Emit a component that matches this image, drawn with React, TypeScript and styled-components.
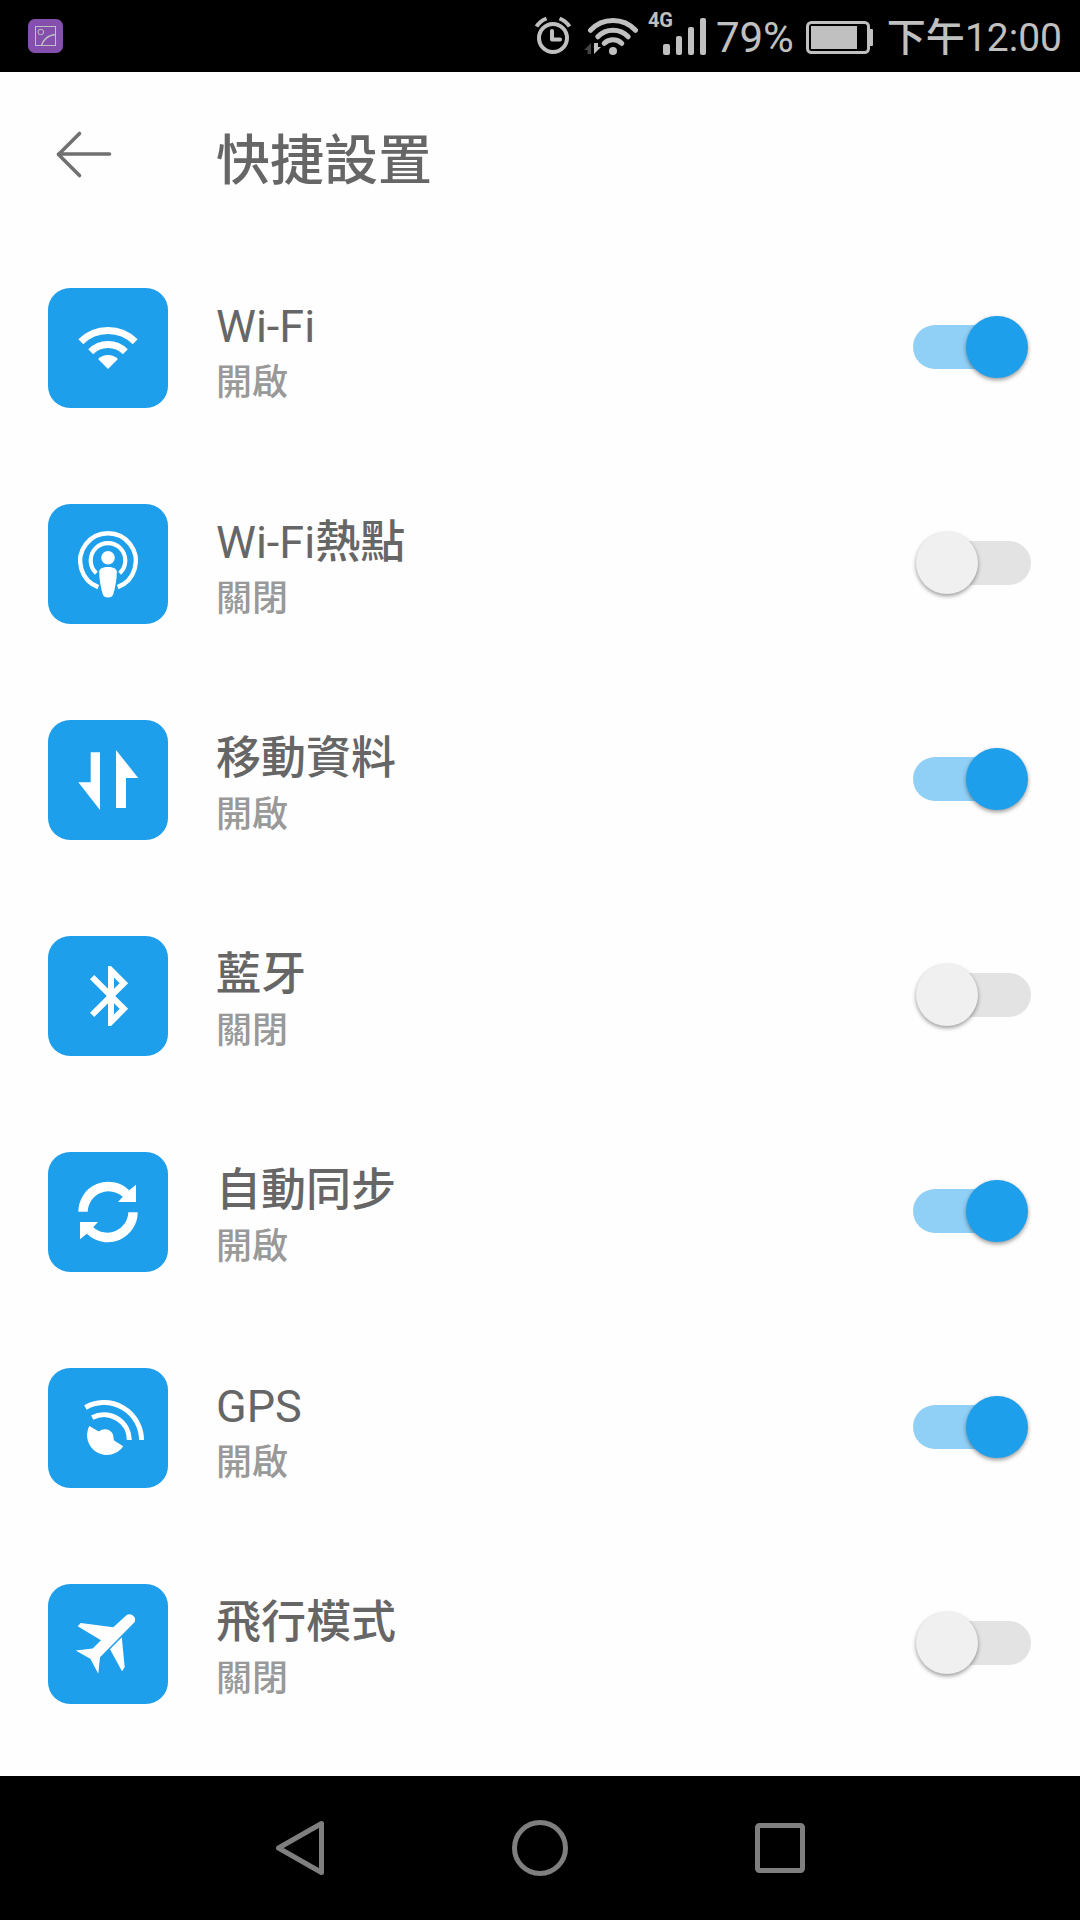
import React, { useState } from "react";
import styled, { createGlobalStyle } from "styled-components";

const GlobalStyle = createGlobalStyle`
  * { box-sizing: border-box; }
  body {
    margin: 0;
    background: #000;
    font-family: Roboto, "Noto Sans CJK TC", sans-serif;
  }
`;

const Screen = styled.div`
  display: flex;
  flex-direction: column;
  min-height: 100vh;
  background: #fefefe;
`;

const StatusBar = styled.div`
  display: flex;
  align-items: center;
  justify-content: space-between;
  padding: 0 18px 0 28px;
  background: #000;
  color: #c0c0c0;
`;

const StatusGroup = styled.div`
  display: flex;
  align-items: center;
  gap: 8px;
`;

const StatusIcon = styled.svg`
  display: block;
  flex: none;
  height: 72px;
`;

const StatusText = styled.span<{ $size: number }>`
  padding-top: 3px;
  font-size: ${(p) => p.$size}px;
  line-height: 48px;
  white-space: nowrap;
`;

const Han = styled.span`
  font-weight: 500;
`;

const Signal = styled.div`
  position: relative;
`;

const NetworkType = styled.span`
  position: absolute;
  top: 8px;
  left: 2px;
  font-size: 20px;
  font-weight: 700;
  line-height: 24px;
`;

const Header = styled.header`
  display: flex;
  align-items: center;
  gap: 96px;
  height: 168px;
  padding: 0 48px;
`;

const IconButton = styled.button`
  display: block;
  flex: none;
  padding: 0;
  border: 0;
  background: none;
  cursor: pointer;

  svg {
    display: block;
  }
`;

const Title = styled.h1`
  margin: 0;
  padding-top: 12px;
  color: #666;
  font-size: 54px;
  font-weight: 500;
  line-height: 64px;
`;

const List = styled.ul`
  flex: 1;
  margin: 0;
  padding: 0 0 24px;
  list-style: none;
`;

const Row = styled.li`
  display: flex;
  align-items: center;
  gap: 48px;
  height: 216px;
  padding: 0 48px;
`;

const Tile = styled.svg`
  flex: none;
  width: 120px;
  height: 120px;
  border-radius: 22px;
  background: #1e9fec;
`;

const RowText = styled.label`
  flex: 1;
  display: flex;
  flex-direction: column;
  cursor: pointer;
`;

const RowName = styled.span`
  color: #666;
  font-size: 45px;
  line-height: 70px;
`;

const RowState = styled.span`
  color: #999;
  font-size: 36px;
  font-weight: 500;
  line-height: 42px;
`;

const Switch = styled.input`
  appearance: none;
  display: grid;
  align-items: center;
  flex: none;
  width: 120px;
  height: 66px;
  margin: 0;
  padding: 0 1px 2px;
  cursor: pointer;

  &::before,
  &::after {
    content: "";
    grid-area: 1 / 1;
  }

  &::before {
    justify-self: end;
    width: 100px;
    height: 44px;
    border-radius: 22px;
    background: #e3e3e3;
  }

  &::after {
    justify-self: start;
    width: 62px;
    height: 62px;
    margin: 0 3px;
    border-radius: 50%;
    background: #f0f0f0;
    box-shadow: 0 2px 4px rgba(0, 0, 0, 0.4);
  }

  &:checked::before {
    justify-self: start;
    background: #90d0f6;
  }

  &:checked::after {
    justify-self: end;
    background: #1e9fec;
  }
`;

const NavBar = styled.nav`
  display: flex;
  align-items: center;
  justify-content: center;
  gap: 144px;
  height: 144px;
  background: #000;
`;

const glyphs = {
  wifi: (
    <>
      <g fill="none" stroke="#fff" strokeWidth="7">
        <path d="M32.8 53.8A38.5 38.5 0 0 1 87.2 53.8" />
        <path d="M42.7 63.7A24.5 24.5 0 0 1 77.3 63.7" />
      </g>
      <path fill="#fff" d="M60 81L50.1 71.1A14 14 0 0 1 69.9 71.1Z" />
    </>
  ),
  hotspot: (
    <>
      <g fill="none" stroke="#fff">
        <path strokeWidth="4.4" d="M50.3 83.1A27.8 27.8 0 1 1 69.7 83.1" />
        <path strokeWidth="4.2" d="M48.4 69.2A17.3 17.3 0 1 1 71.6 69.2" />
      </g>
      <circle cx="60" cy="53.7" r="6.8" fill="#fff" />
      <path
        fill="#fff"
        d="M60 63C65 63 68.8 64.4 68.8 68C68.8 76 67 84 65.3 90C64.6 92.4 63.4 93.4 60 93.4S55.4 92.4 54.7 90C53 84 51.2 76 51.2 68C51.2 64.4 55 63 60 63Z"
      />
    </>
  ),
  data: (
    <path
      fill="#fff"
      d="M42.7 32.3H52V90L30.3 62.3H42.7ZM68 30L90.3 58H78V88H68Z"
    />
  ),
  bluetooth: (
    <path
      fill="#fff"
      transform="translate(27 24) scale(3)"
      d="M17.71 7.71L12 2h-1v7.59L6.41 5 5 6.41 10.59 12 5 17.59 6.41 19 11 14.41V22h1l5.71-5.71-4.3-4.29 4.3-4.29zM13 5.83l1.88 1.88L13 9.59V5.83zm1.88 10.46L13 18.17v-3.76l1.88 1.88z"
    />
  ),
  sync: (
    <g fill="#fff">
      <path d="M30.3 59.7A30 30 0 0 1 81.2 38.2L88 32.7V50H70L74.8 44.8A21 21 0 0 0 39.7 59.7Z" />
      <path
        transform="rotate(180 60 60)"
        d="M30.3 59.7A30 30 0 0 1 81.2 38.2L88 32.7V50H70L74.8 44.8A21 21 0 0 0 39.7 59.7Z"
      />
    </g>
  ),
  gps: (
    <>
      <g fill="none" stroke="#fff" strokeWidth="5">
        <path d="M37.4 39.5A37.5 37.5 0 0 1 93.5 72" />
        <path d="M44.2 49.6A25.3 25.3 0 0 1 81.3 72" />
      </g>
      <path
        fill="#fff"
        d="M41.3 58L50.3 63.3Q52 63.2 53.2 62A8.6 8.6 0 0 1 65.5 69Q65.2 71.4 66.4 72.8L75.3 78.2A19.8 19.8 0 0 1 41.3 58Z"
      />
    </>
  ),
  airplane: (
    <path
      fill="#fff"
      d="M78.7 31C82 28.6 89 32 86.7 38L52 73.3L50.3 89.7L42.3 74.7L27.7 66.6L44.7 64.6L53 56.3L29.7 42.3L32.7 39L65.3 43.3ZM73.8 53.3L76.7 83.3L74 87.3L62 65.3Z"
    />
  ),
};

type Setting = { id: keyof typeof glyphs; latin?: string; han?: string; on: boolean };

const initialSettings: Setting[] = [
  { id: "wifi", latin: "Wi-Fi", on: true },
  { id: "hotspot", latin: "Wi-Fi", han: "熱點", on: false },
  { id: "data", han: "移動資料", on: true },
  { id: "bluetooth", han: "藍牙", on: false },
  { id: "sync", han: "自動同步", on: true },
  { id: "gps", latin: "GPS", on: true },
  { id: "airplane", han: "飛行模式", on: false },
];

function Status() {
  return (
    <StatusBar>
      <StatusIcon width="36" viewBox="0 0 36 72" aria-hidden="true">
        <rect x="0" y="19" width="35" height="34" rx="7" fill="#8550ad" />
        <g fill="none" stroke="#c0c0c0">
          <rect x="7.5" y="26.5" width="20" height="19" />
          <circle cx="12.8" cy="32" r="2.8" />
          <path d="M13.5 45.5C15 40 20 35 27.5 34.5" strokeWidth="1.4" />
        </g>
      </StatusIcon>
      <StatusGroup>
        <StatusIcon width="42" viewBox="0 0 42 72" aria-hidden="true">
          <g fill="none" stroke="#c0c0c0" strokeWidth="4">
            <circle cx="19" cy="38" r="14" />
            <path d="M18 31V39.5H26" strokeLinecap="round" strokeLinejoin="round" />
            <path d="M2.5 26.5Q6 21 12.5 18.5M35.5 26.5Q32 21 25.5 18.5" />
          </g>
        </StatusIcon>
        <StatusIcon width="54" viewBox="0 0 54 72" aria-hidden="true">
          <g fill="none" stroke="#c0c0c0" strokeWidth="5" strokeLinecap="round">
            <path d="M6.5 30.3A31 31 0 0 1 51.5 30.3" />
            <path d="M13.8 36.8A21 21 0 0 1 44.2 36.8" />
            <path d="M20.2 43.3A13 13 0 0 1 37.8 43.3" />
          </g>
          <circle cx="29" cy="51" r="4" fill="#c0c0c0" />
          <path d="M0 50L7 43V54H3.5V50Z" fill="#444" />
          <path d="M10 43H14V47H17L10 54Z" fill="#c0c0c0" />
        </StatusIcon>
        <Signal>
          <NetworkType>4G</NetworkType>
          <StatusIcon width="62" viewBox="0 0 62 72" aria-hidden="true">
            <g fill="#c0c0c0">
              <rect x="17" y="44" width="7" height="11" rx="2" />
              <rect x="30" y="36" width="6" height="19" rx="2" />
              <rect x="42" y="27" width="6" height="28" rx="2" />
              <rect x="54" y="18" width="6" height="37" rx="2" />
            </g>
          </StatusIcon>
        </Signal>
        <StatusText $size={42}>79%</StatusText>
        <StatusIcon width="77" viewBox="0 0 77 72" aria-hidden="true">
          <rect x="5.5" y="22.5" width="61" height="30" rx="4" fill="none" stroke="#c0c0c0" strokeWidth="3" />
          <rect x="9" y="26" width="46" height="23" fill="#c0c0c0" />
          <rect x="67" y="29" width="4" height="17" rx="1" fill="#c0c0c0" />
        </StatusIcon>
        <StatusText $size={39}>
          <Han>下午</Han>12:00
        </StatusText>
      </StatusGroup>
    </StatusBar>
  );
}

export default function App() {
  const [settings, setSettings] = useState(initialSettings);

  const toggle = (id: string) =>
    setSettings((list) => list.map((s) => (s.id === id ? { ...s, on: !s.on } : s)));

  return (
    <>
      <GlobalStyle />
      <Screen>
        <Status />
        <Header>
          <IconButton type="button" aria-label="返回">
            <svg width="72" height="72" viewBox="0 0 72 72" fill="none" stroke="#707070" strokeWidth="3.6" strokeLinecap="round" strokeLinejoin="round">
              <path d="M31.5 13.5L10.5 34.5L31.5 55.5M10.5 34H61.5" />
            </svg>
          </IconButton>
          <Title>快捷設置</Title>
        </Header>
        <List>
          {settings.map((s) => (
            <Row key={s.id}>
              <Tile viewBox="0 0 120 120" aria-hidden="true">
                {glyphs[s.id]}
              </Tile>
              <RowText htmlFor={s.id}>
                <RowName>
                  {s.latin}
                  {s.han && <Han>{s.han}</Han>}
                </RowName>
                <RowState>{s.on ? "開啟" : "關閉"}</RowState>
              </RowText>
              <Switch id={s.id} type="checkbox" role="switch" checked={s.on} onChange={() => toggle(s.id)} />
            </Row>
          ))}
        </List>
        <NavBar>
          <IconButton type="button" aria-label="上一頁">
            <svg width="96" height="96" viewBox="0 0 96 96" fill="none" stroke="#7f7f7f" strokeWidth="5" strokeLinejoin="round">
              <path d="M69.5 23.5V72.5L26.5 48Z" />
            </svg>
          </IconButton>
          <IconButton type="button" aria-label="主畫面">
            <svg width="96" height="96" viewBox="0 0 96 96" fill="none" stroke="#7f7f7f" strokeWidth="5">
              <circle cx="48" cy="48" r="25.5" />
            </svg>
          </IconButton>
          <IconButton type="button" aria-label="最近使用">
            <svg width="96" height="96" viewBox="0 0 96 96" fill="none" stroke="#7f7f7f" strokeWidth="5">
              <rect x="25.5" y="25.5" width="45" height="45" rx="2" />
            </svg>
          </IconButton>
        </NavBar>
      </Screen>
    </>
  );
}
